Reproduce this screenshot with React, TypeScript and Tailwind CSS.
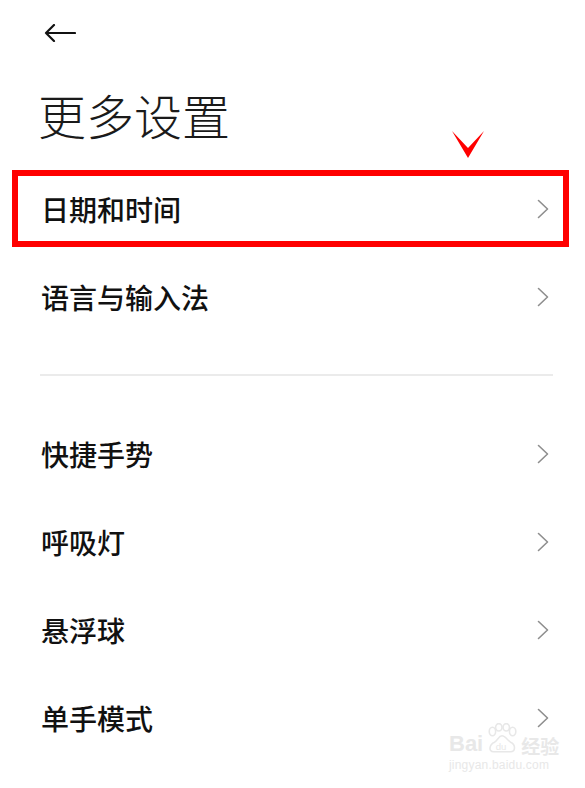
import React from "react";

const FONT = { fontFamily: '"Noto Sans CJK SC", "Noto Sans", sans-serif' };

function Chevron() {
  return (
    <svg width="12" height="20" viewBox="0 0 12 20" fill="none">
      <path d="M1.5 1.5 L10.5 10 L1.5 18.5" stroke="#8e8e8e" strokeWidth="1.6" strokeLinecap="round" strokeLinejoin="round" />
    </svg>
  );
}

function Row({ label, children }: { label: string; children?: React.ReactNode }) {
  return (
    <div className="relative flex h-[88px] items-center justify-between pl-[41px] pr-[36px]">
      <span className="text-[28px] font-medium leading-none text-[#111111]">{label}</span>
      <Chevron />
      {children}
    </div>
  );
}

export default function App() {
  return (
    <div className="relative h-[788px] w-[585px] overflow-hidden bg-white" style={FONT}>
      <div className="flex h-[66px] items-center pl-[44px]">
        <svg width="32" height="18" viewBox="0 0 32 18" fill="none">
          <path d="M2 9 H31 M10 1 L2 9 L10 17" stroke="#111111" strokeWidth="2.2" strokeLinecap="round" strokeLinejoin="round" />
        </svg>
      </div>
      <div className="flex h-[99px] items-center pb-[4px] pl-[38px]">
        <h1 className="text-[48px] font-light leading-none text-[#1a1a1a]">更多设置</h1>
      </div>
      <div>
        <Row label="日期和时间">
          <div className="absolute left-[12px] top-[5px] h-[77px] w-[557px] border-[6px] border-[#ff0000]" />
          <svg className="absolute left-[452px] top-[-34px]" width="32" height="27" viewBox="0 0 32 27">
            <polygon points="0,0 16,17 32,0 16,27" fill="#ff0000" />
          </svg>
        </Row>
        <Row label="语言与输入法" />
        <div className="h-[69px] pt-[33px]">
          <div className="ml-[40px] mr-[32px] h-[2px] bg-[#ebebeb]" />
        </div>
        <Row label="快捷手势" />
        <Row label="呼吸灯" />
        <Row label="悬浮球" />
        <Row label="单手模式" />
      </div>
      <div className="pointer-events-none absolute left-[449px] top-[723px] flex flex-col items-start text-[#e8e8e8]">
        <div className="flex items-end gap-[2px]">
          <span className="text-[22px] font-bold leading-none" style={{ fontFamily: '"Liberation Sans", sans-serif' }}>Bai</span>
          <svg width="34" height="32" viewBox="0 0 32 30" fill="none" stroke="#e8e8e8" strokeWidth="1.5">
            <ellipse cx="7" cy="8" rx="3" ry="4" />
            <ellipse cx="13" cy="4" rx="3" ry="3.5" />
            <ellipse cx="20" cy="4" rx="3" ry="3.5" />
            <ellipse cx="26" cy="8" rx="3" ry="4" />
            <path d="M8 27 C3 27 4 20 9 18 C12 16 13 12 16 12 C19 12 21 16 24 18 C29 20 29 27 24 27 Z" />
            <text x="10" y="25" fontSize="9" fill="#e8e8e8" stroke="none" fontFamily="Liberation Sans">du</text>
          </svg>
          <span className="text-[19px] font-bold leading-none">经验</span>
        </div>
        <span className="mt-[4px] text-[12px] leading-none tracking-[0.2px]" style={{ fontFamily: '"Liberation Sans", sans-serif' }}>jingyan.baidu.com</span>
      </div>
    </div>
  );
}
